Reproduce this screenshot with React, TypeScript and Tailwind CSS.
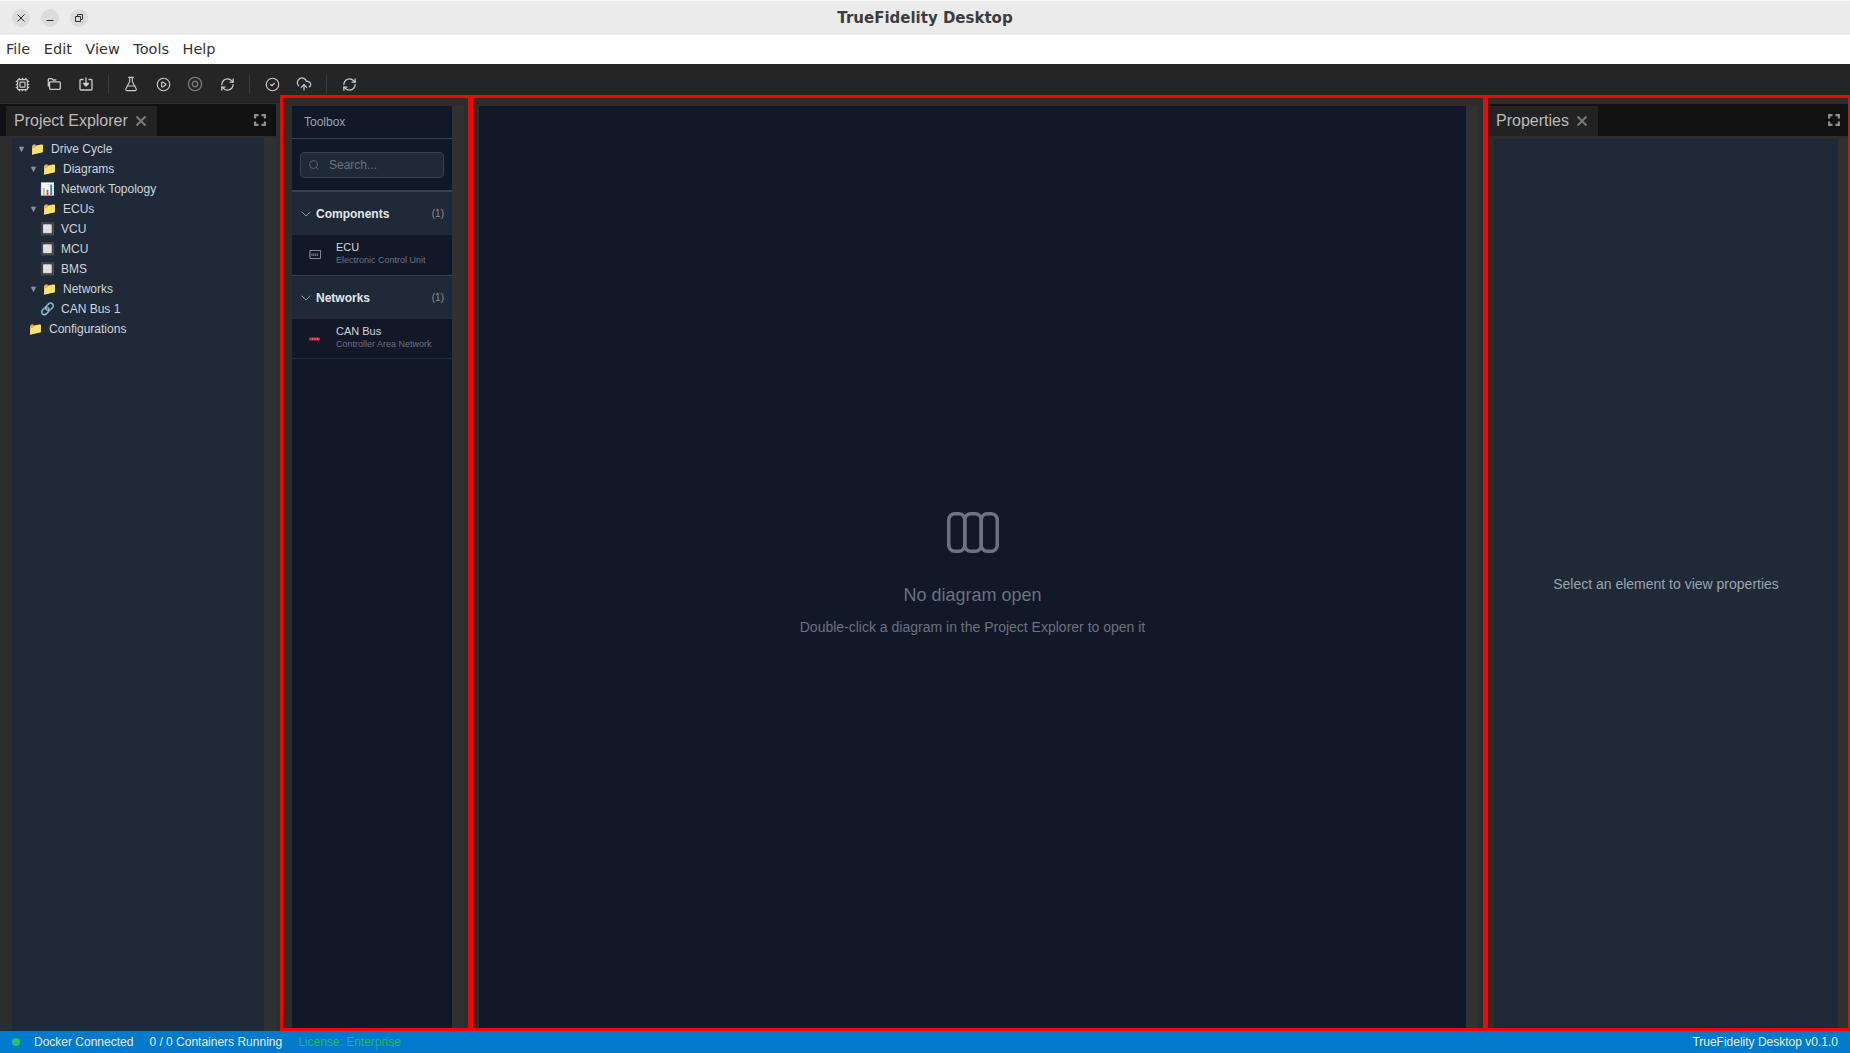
import React from "react";
import { CirclePlay, CircleCheck, CloudUpload, FlaskConical, Cpu, Search, ChevronDown, RefreshCw } from "lucide-react";

const sans = "font-['Liberation_Sans',Arial,sans-serif]";
const dejavu = "font-['DejaVu_Sans',sans-serif]";

function ExpandIcon() {
  return (
    <svg width="12" height="12" viewBox="0 0 12 12" fill="none" stroke="#8f8f8f" strokeWidth="2.2">
      <path d="M1.100 4.500V1.100h3.400M7.500 1.100h3.400v3.400M10.900 7.500v3.400H7.500M4.500 10.900H1.100V7.500" />
    </svg>
  );
}

function CloseX() {
  return (
    <svg width="12" height="12" viewBox="0 0 12 12" fill="none" stroke="#777777" strokeWidth="2.2">
      <path d="M1.500 1.500l9 9M10.500 1.500l-9 9" />
    </svg>
  );
}

function TabBar({ title, tabWidth, ml, mr }: { title: string; tabWidth: string; ml: string; mr: string }) {
  return (
    <div className="flex h-[32px] shrink-0 items-end justify-between bg-[#111111]">
      <div className={`flex h-[30px] items-center gap-[7px] bg-[#222222] pl-[8px] ${tabWidth} ${ml}`}>
        <span className={`${sans} text-[16px] leading-none text-[#bbbbbb]`}>{title}</span>
        <CloseX />
      </div>
      <div className={`mb-[10px] ${mr}`}>
        <ExpandIcon />
      </div>
    </div>
  );
}

function Row({ pl, arrow, icon, label }: { pl: string; arrow?: boolean; icon: string; label: string }) {
  return (
    <div className={`flex h-[20px] items-center ${pl}`}>
      {arrow && <span className="mr-[5px] w-[8px] text-[9px] leading-none text-[#8b93a1]">▼</span>}
      <span className="w-[14px] text-[12px] leading-none">{icon}</span>
      <span className="ml-[7px] text-[12px] text-[#d1d5db]">{label}</span>
    </div>
  );
}

function ProjectTree() {
  return (
    <div className={`${sans} pt-[1px]`}>
      <Row pl="pl-[5px]" arrow icon="📁" label="Drive Cycle" />
      <Row pl="pl-[17px]" arrow icon="📁" label="Diagrams" />
      <Row pl="pl-[28px]" icon="📊" label="Network Topology" />
      <Row pl="pl-[17px]" arrow icon="📁" label="ECUs" />
      <Row pl="pl-[28px]" icon="🔲" label="VCU" />
      <Row pl="pl-[28px]" icon="🔲" label="MCU" />
      <Row pl="pl-[28px]" icon="🔲" label="BMS" />
      <Row pl="pl-[17px]" arrow icon="📁" label="Networks" />
      <Row pl="pl-[28px]" icon="🔗" label="CAN Bus 1" />
      <Row pl="pl-[16px]" icon="📁" label="Configurations" />
    </div>
  );
}

function ToolBtn({ children }: { children: React.ReactNode }) {
  return <div className="flex h-[32px] w-[32px] items-center justify-center text-[#cccccc]">{children}</div>;
}

function Sep() {
  return <div className="mx-[6px] h-[19px] w-px bg-[#3a3a3a]" />;
}

function Folders() {
  return (
    <svg width="16" height="16" viewBox="0 0 16 16" fill="none" stroke="currentColor" strokeWidth="1.300" strokeLinejoin="round">
      <path d="M2.300 10.500V3.600c0-.6.4-1 1-1h2.500l1.300 1.400h3.200" />
      <path d="M4.600 13.300h8.700c.6 0 1-.4 1-1V6.800c0-.6-.4-1-1-1H4.600c-.6 0-1 .4-1 1v5.500c0 .6.4 1 1 1z" />
    </svg>
  );
}

function SaveIn() {
  return (
    <svg width="16" height="16" viewBox="0 0 16 16" fill="none" stroke="currentColor" strokeWidth="1.300" strokeLinejoin="round" strokeLinecap="round">
      <path d="M5 3.500H3c-.6 0-1 .4-1 1V13c0 .6.4 1 1 1h10c.6 0 1-.4 1-1V4.500c0-.6-.4-1-1-1h-2" />
      <path d="M8 2v7.500" />
      <path d="M5.500 7.500L8 10l2.500-2.500z" fill="currentColor" />
    </svg>
  );
}

function Target() {
  return (
    <svg width="16" height="16" viewBox="0 0 16 16" fill="none" stroke="#777777" strokeWidth="1.400">
      <circle cx="8" cy="8" r="6.600" />
      <circle cx="8" cy="8" r="2.700" />
    </svg>
  );
}

function Toolbar() {
  return (
    <div className="flex h-[39px] shrink-0 items-center bg-[#252525] pl-[6px] pt-[1px]">
      <ToolBtn><Cpu size={15} strokeWidth={2} /></ToolBtn>
      <ToolBtn><Folders /></ToolBtn>
      <ToolBtn><SaveIn /></ToolBtn>
      <Sep />
      <ToolBtn><FlaskConical size={16} strokeWidth={1.700} /></ToolBtn>
      <ToolBtn><CirclePlay size={15} strokeWidth={1.800} /></ToolBtn>
      <ToolBtn><Target /></ToolBtn>
      <ToolBtn><RefreshCw size={15} strokeWidth={2} /></ToolBtn>
      <Sep />
      <ToolBtn><CircleCheck size={15} strokeWidth={1.800} /></ToolBtn>
      <ToolBtn><CloudUpload size={16} strokeWidth={1.800} /></ToolBtn>
      <Sep />
      <ToolBtn><RefreshCw size={15} strokeWidth={2} /></ToolBtn>
    </div>
  );
}

function WinBtn({ children }: { children: React.ReactNode }) {
  return <div className="flex h-[18px] w-[18px] items-center justify-center rounded-full bg-[#dcdcdc]">{children}</div>;
}

function TitleBar() {
  return (
    <div className="relative flex h-[35px] shrink-0 items-center gap-[11px] border-t border-[#f6f6f6] bg-[#ebebeb] pl-[12px]">
      <WinBtn>
        <svg width="10" height="10" viewBox="0 0 10 10" stroke="#2e2e2e" strokeWidth="1"><path d="M1.500 1.500l7 7M8.500 1.500l-7 7" /></svg>
      </WinBtn>
      <WinBtn>
        <svg width="10" height="10" viewBox="0 0 10 10" stroke="#2e2e2e" strokeWidth="1"><path d="M1.500 7.500h7" /></svg>
      </WinBtn>
      <WinBtn>
        <svg width="10" height="10" viewBox="0 0 10 10" fill="none" stroke="#2e2e2e" strokeWidth="1"><path d="M1.500 3.500h5v5h-5zM3.500 3.500v-2h5v5h-2" /></svg>
      </WinBtn>
      <div className={`${dejavu} absolute inset-0 flex items-center justify-center text-[15px] font-bold text-[#3d3d3d]`}>TrueFidelity Desktop</div>
    </div>
  );
}

function MenuBar() {
  return (
    <div className={`${dejavu} flex h-[29px] shrink-0 items-center gap-[13.5px] bg-white pl-[6px] pt-[1px] text-[14.5px] text-[#333333]`}>
      <span>File</span>
      <span>Edit</span>
      <span>View</span>
      <span>Tools</span>
      <span>Help</span>
    </div>
  );
}

function SectionHeader({ label }: { label: string }) {
  return (
    <div className="flex h-[43px] items-center justify-between bg-[#1f2937] pl-[6px] pr-[8px]">
      <div className="flex items-center gap-[2px]">
        <ChevronDown size={16} strokeWidth={1.300} className="text-[#9ca3af]" />
        <span className="text-[12px] font-bold text-[#e5e7eb]">{label}</span>
      </div>
      <span className="text-[10px] text-[#8b93a1]">(1)</span>
    </div>
  );
}

function ToolItem({ icon, name, desc, border, height, textMb, iconMb }: { icon: React.ReactNode; name: string; desc: string; border: string; height: string; textMb: string; iconMb: string }) {
  return (
    <div className={`flex ${height} items-center border-b ${border} pl-[17px]`}>
      <div className={`flex w-[12px] justify-center ${iconMb}`}>{icon}</div>
      <div className={`ml-[15px] flex flex-col ${textMb}`}>
        <span className="text-[11px] leading-[14px] text-[#d1d5db]">{name}</span>
        <span className="text-[9px] leading-[12px] text-[#6b7280]">{desc}</span>
      </div>
    </div>
  );
}

function ScrollStrip({ width }: { width: string }) {
  return <div className={`${width} shrink-0 bg-[#313131]`} />;
}

function Toolbox() {
  return (
    <div className={`${sans} flex w-[191px] shrink-0 border-[3px] border-[#ff0000] bg-[#2d2d2d] pl-[9px] pr-[4px] pt-[8px]`}>
      <div className="flex min-w-0 flex-1 flex-col bg-[#111827]">
        <div className="flex h-[33px] items-center border-b border-[#374151] pl-[12px] text-[12px] text-[#9ca3af]">Toolbox</div>
        <div className="border-b-2 border-[#374151] px-[8px] pb-[12px] pt-[13px]">
          <div className="flex h-[26px] items-center rounded-[4px] border border-[#374151] bg-[#1f2937] pl-[7px]">
            <Search size={12} strokeWidth={1.500} className="text-[#6b7280]" />
            <span className="ml-[9px] text-[12px] text-[#6b7280]">Search...</span>
          </div>
        </div>
        <SectionHeader label="Components" />
        <ToolItem
          name="ECU"
          desc="Electronic Control Unit"
          border="border-[#374151]"
          height="h-[41px]"
          textMb="mb-[4px]"
          iconMb="mb-[2px]"
          icon={
            <svg width="12" height="9" viewBox="0 0 12 9" fill="none" stroke="#9ca3af" strokeWidth="0.800">
              <rect x="1" y="0.500" width="10.500" height="8" />
              <path d="M0 3h1M0 6h1M3 3.500v2.500M4.800 3.500v2.500M6.600 3.500v2.500M8.400 3.500v2.500" />
            </svg>
          }
        />
        <SectionHeader label="Networks" />
        <ToolItem
          name="CAN Bus"
          desc="Controller Area Network"
          border="border-[#1f2937]"
          height="h-[40px]"
          textMb="mb-[3px]"
          iconMb="mb-0"
          icon={
            <svg width="12" height="4" viewBox="0 0 12 4">
              <rect width="11" height="3" y="0.500" rx="1" fill="#dc2626" />
              <path d="M3 2h1.200M5.500 2h1.200M8 2h1.200" stroke="#fca5a5" strokeWidth="1" />
            </svg>
          }
        />
      </div>
      <ScrollStrip width="w-[12px]" />
    </div>
  );
}

function Diagram() {
  return (
    <div className={`${sans} -ml-[1px] flex min-w-0 flex-1 border-[3px] border-[#ff0000] bg-[#2d2d2d] pl-[6px] pr-[5px] pt-[8px]`}>
      <div className="flex flex-1 flex-col items-center bg-[#111827] pt-[406px]">
        <svg width="52" height="41" viewBox="0 0 52 41" fill="none" stroke="#6b7280" strokeWidth="3.500">
          <rect x="1.750" y="1.750" width="16" height="37.500" rx="6" />
          <rect x="17.750" y="1.750" width="16.500" height="37.500" rx="6" />
          <rect x="34.250" y="1.750" width="16" height="37.500" rx="6" />
        </svg>
        <div className="mt-[32px] text-[18px] leading-[21px] text-[#6b7280]">No diagram open</div>
        <div className="mt-[13px] text-[14px] leading-[16px] text-[#6b7280]">Double-click a diagram in the Project Explorer to open it</div>
      </div>
      <ScrollStrip width="w-[12px]" />
    </div>
  );
}

function Properties() {
  return (
    <div className={`${sans} -ml-[1px] flex w-[365px] shrink-0 flex-col border-[3px] border-r-2 border-[#ff0000] bg-[#2d2d2d] pt-[6px]`}>
      <TabBar title="Properties" tabWidth="w-[110px]" ml="ml-0" mr="mr-[8px]" />
      <div className="mt-[3px] flex flex-1 pl-[6px]">
        <div className="flex flex-1 justify-center bg-[#1f2937] pt-[437px] text-[14px] leading-[16px] text-[#9ca3af]">
          Select an element to view properties
        </div>
        <ScrollStrip width="w-[10px]" />
      </div>
    </div>
  );
}

function StatusBar() {
  return (
    <div className={`${sans} flex h-[22px] shrink-0 items-center justify-between bg-[#007acc] px-[12px] text-[12px] text-white`}>
      <div className="flex items-center">
        <span className="h-[8px] w-[8px] rounded-full bg-[#22c55e]" />
        <span className="ml-[14px] opacity-90">Docker Connected</span>
        <span className="ml-[16px] opacity-90">0 / 0 Containers Running</span>
        <span className="ml-[16px] text-[#28b463]">License: Enterprise</span>
      </div>
      <span className="opacity-90">TrueFidelity Desktop v0.1.0</span>
    </div>
  );
}

export default function App() {
  return (
    <div className="flex h-[1053px] w-[1850px] flex-col overflow-hidden bg-[#2d2d2d]">
      <TitleBar />
      <MenuBar />
      <Toolbar />
      <div className="flex min-h-0 flex-1">
        <div className="flex w-[280px] shrink-0 flex-col bg-[#2d2d2d] pt-[1px]">
          <div className="pr-[4px]">
            <TabBar title="Project Explorer" tabWidth="w-[151px]" ml="ml-[6px]" mr="mr-[10px]" />
          </div>
          <div className="mt-[2px] flex min-h-0 flex-1 pl-[12px] pr-[4px]">
            <div className="flex-1 bg-[#1f2937]">
              <ProjectTree />
            </div>
            <ScrollStrip width="w-[12px]" />
          </div>
        </div>
        <div className="-mt-[8px] flex min-w-0 flex-1">
          <Toolbox />
          <Diagram />
          <Properties />
        </div>
      </div>
      <StatusBar />
    </div>
  );
}
